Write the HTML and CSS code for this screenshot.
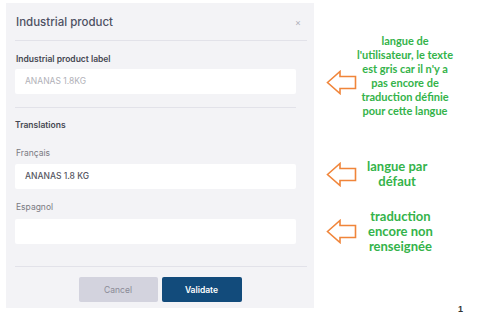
FILE: index.html
```html
<!DOCTYPE html>
<html lang="fr">
  <head>
    <meta charset="UTF-8" />
    <meta name="viewport" content="width=device-width, initial-scale=1.0" />
    <title>Industrial product</title>
    <link rel="stylesheet" href="styles.css">
  </head>
  <body>
    <div class="page">
      <div class="modal">
        <div class="modal-header">
          <span class="modal-title">Industrial product</span>
          <span class="close">×</span>
        </div>
        <div class="modal-body">
          <div class="label strong">Industrial product label</div>
          <div class="input placeholder">ANANAS 1.8KG</div>
          <div class="divider"></div>
          <div class="section">Translations</div>
          <div class="label first">Français</div>
          <div class="input filled">ANANAS 1.8 KG</div>
          <div class="label second">Espagnol</div>
          <div class="input"></div>
        </div>
        <div class="modal-footer">
          <button class="btn cancel">Cancel</button>
          <button class="btn validate">Validate</button>
        </div>
      </div>

      <div class="notes">
        <div class="note note-user">
          <svg class="arrow" width="31" height="25" viewBox="0 0 31 25">
            <path d="M1.5 12.5 L14 1.5 L14 6.5 L29.5 6.5 L29.5 18.5 L14 18.5 L14 23.5 Z" />
          </svg>
          <p>langue de<br>l'utilisateur, le texte<br>est gris car il n'y a<br>pas encore de<br>traduction définie<br>pour cette langue</p>
        </div>
        <div class="note note-default">
          <svg class="arrow" width="31" height="25" viewBox="0 0 31 25">
            <path d="M1.5 12.5 L14 1.5 L14 6.5 L29.5 6.5 L29.5 18.5 L14 18.5 L14 23.5 Z" />
          </svg>
          <p>langue par<br>défaut</p>
        </div>
        <div class="note note-empty">
          <svg class="arrow" width="31" height="25" viewBox="0 0 31 25">
            <path d="M1.5 12.5 L14 1.5 L14 6.5 L29.5 6.5 L29.5 18.5 L14 18.5 L14 23.5 Z" />
          </svg>
          <p>traduction<br>encore non<br>renseignée</p>
        </div>
      </div>

      <div class="page-number">1</div>
    </div>
  </body>
</html>
```

FILE: styles.css
```css
* {
  margin: 0;
  padding: 0;
  box-sizing: border-box;
}
body {
  background: #fff;
  font-family: Inter, "Open Sans", sans-serif;
}
.page {
  position: relative;
  display: flex;
  width: 489px;
  height: 315px;
}

/* modal */
.modal {
  margin: 3px 0 0 6px;
  width: 308px;
  height: 305px;
  background: #f3f3f6;
  padding: 0 7px 0 9px;
  display: flex;
  flex-direction: column;
}
.modal-header {
  flex: none;
  height: 38px;
  border-bottom: 1px solid #e2e2e9;
  display: flex;
  align-items: center;
  justify-content: space-between;
  padding: 1px 6px 0 1px;
}
.modal-title {
  font-size: 11.5px;
  font-weight: 500;
  color: #4e5163;
}
.close {
  font-size: 9px;
  color: #b0b0ba;
}
.modal-body {
  padding-right: 11px;
}
.label {
  font-size: 8.5px;
  color: #7a7a82;
  height: 12px;
  line-height: 12px;
  margin-left: 1px;
}
.label.strong {
  margin-top: 12px;
  margin-bottom: 4px;
  font-weight: 600;
  color: #454752;
}
.label.first {
  margin-top: 16px;
  margin-bottom: 5px;
}
.label.second {
  margin-top: 12px;
  margin-bottom: 6px;
}
.input {
  height: 25px;
  background: #fff;
  border-radius: 2px;
  font-size: 8.5px;
  line-height: 25px;
  padding-left: 10px;
}
.placeholder {
  color: #b1b1b8;
}
.filled {
  color: #55565f;
  font-weight: 500;
}
.divider {
  height: 1px;
  background: #e2e2e9;
  margin-top: 13px;
}
.section {
  font-size: 8.5px;
  font-weight: 600;
  color: #454752;
  height: 12px;
  line-height: 12px;
  margin-top: 11px;
}
.modal-footer {
  margin-top: 22px;
  border-top: 1px solid #e2e2e9;
  padding-top: 10px;
  padding-right: 2px;
  display: flex;
  justify-content: center;
  gap: 4px;
}
.btn {
  height: 25px;
  border: none;
  border-radius: 2px;
  font-family: Inter, "Open Sans", sans-serif;
  font-size: 8.5px;
}
.cancel {
  width: 79px;
  background: #d3d3de;
  color: #8a8a96;
}
.validate {
  width: 80px;
  background: #124b7b;
  color: #fff;
  font-weight: 600;
}

/* annotations */
.notes {
  margin-left: 12px;
  display: flex;
  flex-direction: column;
}
.note {
  display: flex;
  align-items: center;
}
.note p {
  font-family: Lato, "Open Sans", sans-serif;
  font-weight: 700;
  font-size: 11px;
  line-height: 14px;
  color: #34b34a;
  text-align: center;
}
.arrow {
  flex: none;
}
.arrow path {
  fill: none;
  stroke: #f0853a;
  stroke-width: 1.6;
}
.note-user {
  margin-top: 34px;
}
.note-user .arrow {
  margin-top: 12px;
}
.note-default {
  margin-top: 41px;
}
.note-default p {
  margin-left: 10px;
  font-size: 13px;
  line-height: 15px;
}
.note-empty {
  margin-top: 20px;
}
.note-empty p {
  margin-left: 11px;
  font-size: 13px;
  line-height: 15px;
}
.page-number {
  position: absolute;
  left: 458px;
  top: 304px;
  font-size: 9px;
  font-weight: 700;
  color: #333;
  font-family: "Liberation Sans", sans-serif;
}
```
